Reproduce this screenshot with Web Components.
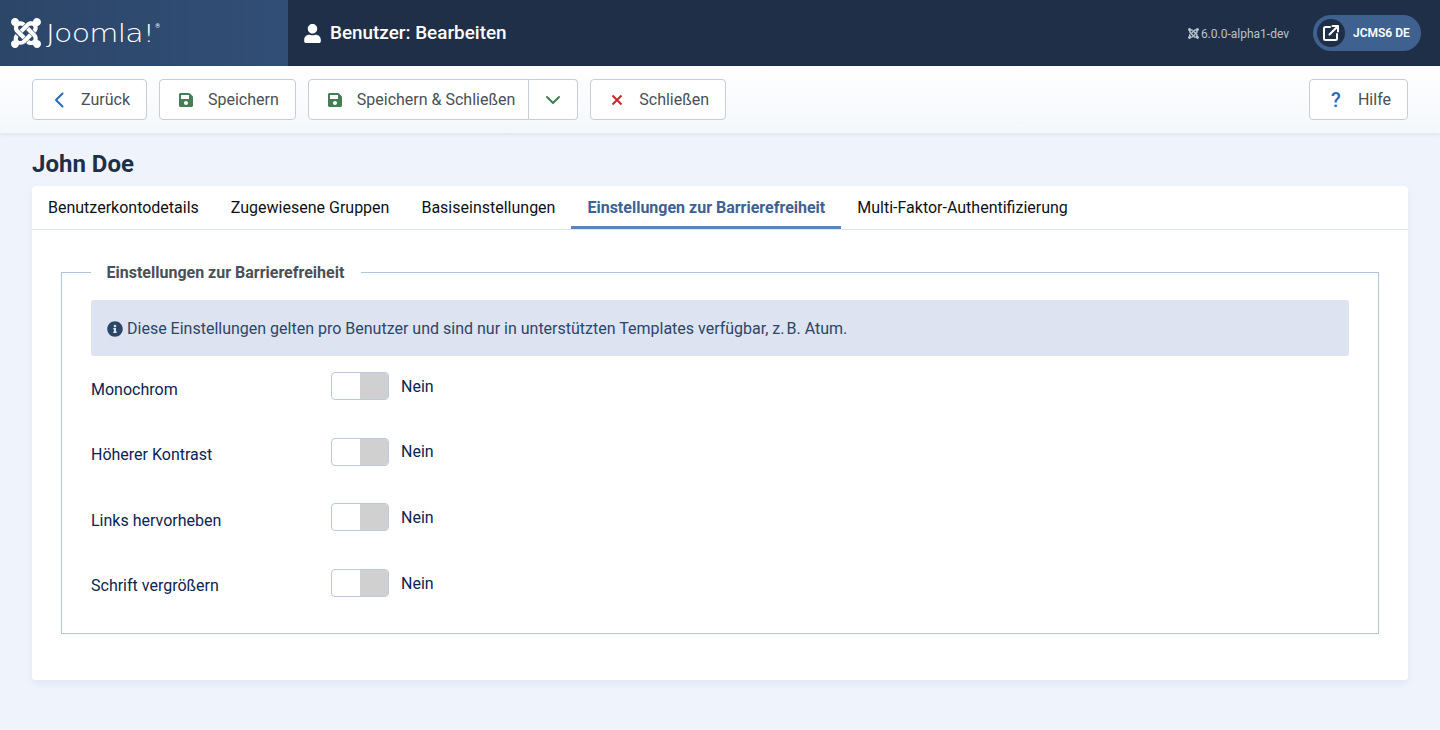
<!DOCTYPE html>
<html lang="de"><head><meta charset="utf-8"><title>Benutzer: Bearbeiten</title>
<style>
html,body{margin:0;height:730px;overflow:hidden;background:#eff4fc;font-family:Roboto,"Liberation Sans",sans-serif}
body{display:flex;flex-direction:column}
</style></head><body>
<app-header></app-header>
<app-toolbar></app-toolbar>
<edit-page></edit-page>
<script>
const ICON={
joomla:'<path d="M.6 92.1C.6 58.8 27.4 32 60.4 32c30 0 54.5 21.9 59.2 50.2 32.6-7.6 67.1.6 96.5 30l-44.3 44.3c-20.5-20.5-42.6-16.3-55.4-3.5-14.3 14.3-14.3 37.9 0 52.2l99.5 99.5-44 44.3c-87.7-87.2-49.7-49.7-99.8-99.7-26.8-26.5-35-64.8-24.8-98.9C20.4 144.6.6 120.7.6 92.1zm129.5 116.4l44.3 44.3c10-10 89.7-89.7 99.7-99.8 14.3-14.3 37.6-14.3 51.9 0 12.8 12.8 17 35-3.5 55.4l44 44.3c31.2-31.2 38.5-67.6 28.9-101.2 29.2-4.1 51.9-29.2 51.9-59.5 0-33.2-26.8-60.1-59.8-60.1-30.3 0-55.4 22.5-59.5 51.6-33.8-9.9-71.7-1.5-98.3 25.1-18.3 19.1-71.1 71.5-99.6 99.9zm266.3 152.2c8.2-32.7-.9-68.5-26.3-93.9-11.8-12.2 5 4.7-99.5-99.7l-44.3 44.3 99.7 99.7c14.3 14.3 14.3 37.6 0 51.9-12.8 12.8-35 17-55.4-3.5l-44 44.3c27.6 30.2 68 38.8 102.7 28 5.5 27.4 29.7 48.1 58.9 48.1 33 0 59.8-26.8 59.8-60.1 0-30.2-22.5-55-51.6-59.1zm-84.3-53.1l-44-44.3c-87.2 87.2-49.7 49.7-99.8 99.7-20.5 20.5-42.6 16.3-55.4 3.5-14.3-14.3-14.3-37.6 0-51.9l-44.3-44.3c-26.5 26.5-35 64.8-24.8 98.9C20.4 367.4.6 391.3.6 419.9c0 33.2 26.8 60.1 59.8 60.1 30.2 0 55-22.4 59.1-51.6 33.8 9.9 71.7 1.4 98.3-25.1 18.2-18.2 29.6-29.4 96.7-96.7z"/>',
save:'<path d="M433.941 129.941l-83.882-83.882A48 48 0 0 0 316.118 32H48C21.49 32 0 53.49 0 80v352c0 26.51 21.49 48 48 48h352c26.51 0 48-21.49 48-48V163.882a48 48 0 0 0-14.059-33.941zM224 416c-35.346 0-64-28.654-64-64 0-35.346 28.654-64 64-64s64 28.654 64 64c0 35.346-28.654 64-64 64zm96-304.52V212c0 6.627-5.373 12-12 12H76c-6.627 0-12-5.373-12-12V108c0-6.627 5.373-12 12-12h228.52c3.183 0 6.235 1.264 8.485 3.515l3.48 3.48A11.996 11.996 0 0 1 320 111.48z"/>',
user:'<path d="M224 256c70.7 0 128-57.3 128-128S294.7 0 224 0 96 57.3 96 128s57.3 128 128 128zm89.6 32h-16.7c-22.2 10.2-46.9 16-72.9 16s-50.6-5.8-72.9-16h-16.7C60.2 288 0 348.2 0 422.4V464c0 26.5 21.5 48 48 48h352c26.5 0 48-21.5 48-48v-41.6c0-74.2-60.2-134.4-134.4-134.4z"/>',
info:'<path d="M256 8C119.043 8 8 119.083 8 256c0 136.997 111.043 248 248 248s248-111.003 248-248C504 119.083 392.957 8 256 8zm0 110c23.196 0 42 18.804 42 42s-18.804 42-42 42-42-18.804-42-42 18.804-42 42-42zm56 254c0 6.627-5.373 12-12 12h-88c-6.627 0-12-5.373-12-12v-24c0-6.627 5.373-12 12-12h12v-64h-12c-6.627 0-12-5.373-12-12v-24c0-6.627 5.373-12 12-12h64c6.627 0 12 5.373 12 12v100h12c6.627 0 12 5.373 12 12v24z"/>'
};
const fa=(n,w,h,c,vb)=>`<svg width="${w}" height="${h}" viewBox="${vb||'0 32 448 448'}" fill="${c}" aria-hidden="true">${ICON[n]}</svg>`;

function def(name,html){
  customElements.define(name,class extends HTMLElement{
    constructor(){super();this.attachShadow({mode:'open'}).innerHTML=typeof html==='function'?html(this):html;}
  });
}

def('app-header',`<style>
:host{display:flex;height:66px;flex:none;background:#1f2f48;color:#fff;align-items:stretch}
.logo{width:288px;box-sizing:border-box;padding-left:11px;display:flex;align-items:center;gap:5px;background:linear-gradient(90deg,#2c4668,#314e76)}
.word{font:200 25px/1 "DejaVu Sans",Lato,sans-serif;letter-spacing:-.65px;color:#fff;display:flex;align-items:flex-start;transform:scaleX(1.2);transform-origin:left center}
.word sup{font:400 5px/1 Roboto,sans-serif;letter-spacing:0;margin:3px 0 0 1px}
.title{display:flex;align-items:center;gap:9px;padding-left:16px;font:500 18.9px/1 Roboto,sans-serif;flex:1}
.ver{display:flex;align-items:center;gap:2px;font:400 12px/1 Roboto,sans-serif;color:#b9c2cf;margin:1px 24px 0 0}
.pill{align-self:center;display:flex;align-items:center;height:36px;width:108px;box-sizing:border-box;padding-left:4px;border-radius:18px;background:#3e6190;margin-right:19px;font:600 12px/1 Roboto,sans-serif;gap:8px}
.dot{width:28px;height:28px;border-radius:50%;background:#1f2f48;display:flex;align-items:center;justify-content:center}
</style>
<div class="logo">${fa('joomla',30,30,'#fff')}<span class="word">Joomla!<sup>®</sup></span></div>
<div class="title">${fa('user',17,19,'#fff','0 0 448 512')}<span>Benutzer: Bearbeiten</span></div>
<div class="ver">${fa('joomla',11,11,'#b9c2cf')}<span>6.0.0-alpha1-dev</span></div>
<div class="pill"><span class="dot"><svg width="18" height="18" viewBox="0 0 18 18" fill="none" stroke="#fff" stroke-width="2" stroke-linecap="round" stroke-linejoin="round"><path d="M8 3H3.500A1.500 1.500 0 0 0 2 4.500V14.500A1.500 1.500 0 0 0 3.500 16H13.500A1.500 1.500 0 0 0 15 14.500V10"/><path d="M7.500 10.500L15.500 2.500M10.500 2H16V7.500"/></svg></span><span>JCMS6 DE</span></div>`);

def('tool-btn',el=>{
  const ic=el.getAttribute('icon');
  const icons={
    back:`<svg width="14" height="16" viewBox="0 0 14 16" fill="none" stroke="#2a69b8" stroke-width="2" stroke-linecap="round" stroke-linejoin="round"><path d="M10.500 1.500L4 8l6.500 6.500"/></svg>`,
    save:fa('save',14,14,'#457d54'),
    close:`<svg width="14" height="14" viewBox="0 0 14 14" fill="none" stroke="#c52827" stroke-width="2"><path d="M2.500 2.500l9 9M11.500 2.500l-9 9"/></svg>`,
    help:`<span style="font:500 20px/1 Roboto,sans-serif;color:#2a69b8">?</span>`
  };
  const pr=el.getAttribute('pr')||'16';
  return `<style>
:host{display:inline-flex;align-items:center;height:41px;box-sizing:border-box;background:#fff;border:1px solid #c6ced9;border-radius:4px;padding:0 ${pr}px 0 16px;font:400 16px/1 Roboto,sans-serif;color:#495057}
.i{width:20px;margin-right:12px;display:flex;justify-content:center;align-items:center}
</style><span class="i">${icons[ic]}</span><span><slot></slot></span>`;
});

def('app-toolbar',`<style>
:host{display:flex;height:67px;flex:none;box-sizing:border-box;padding:13px 32px 0;gap:12px;background:linear-gradient(180deg,#fff,#f4f7fb);box-shadow:0 2px 4px rgba(30,60,110,.08);position:relative;z-index:1}
.group{display:inline-flex;height:41px}
.group tool-btn{border-radius:4px 0 0 4px}
.caret{display:flex;align-items:center;justify-content:center;width:49px;box-sizing:border-box;height:41px;background:#fff;border:1px solid #c6ced9;border-left:0;border-radius:0 4px 4px 0}
.sp{flex:1}
</style>
<tool-btn icon="back">Zurück</tool-btn>
<tool-btn icon="save">Speichern</tool-btn>
<span class="group"><tool-btn icon="save" pr="13">Speichern &amp; Schließen</tool-btn><span class="caret"><svg width="16" height="10" viewBox="0 0 16 10" fill="none" stroke="#457d54" stroke-width="2" stroke-linecap="round" stroke-linejoin="round"><path d="M2 2l6 6 6-6"/></svg></span></span>
<tool-btn icon="close">Schließen</tool-btn>
<span class="sp"></span>
<tool-btn icon="help">Hilfe</tool-btn>`);

def('tab-bar',`<style>
:host{display:flex;height:44px;box-sizing:border-box;border-bottom:1px solid #dfe4ec;font:400 16px/1 Roboto,sans-serif}
span{display:flex;align-items:center;padding:1px 16px 0;height:43px;box-sizing:border-box;color:#0d1117}
.on{font-weight:700;color:#3f6192;border-bottom:3px solid #5f82b8;padding-top:4px}
</style>
<span>Benutzerkontodetails</span><span>Zugewiesene Gruppen</span><span>Basiseinstellungen</span><span class="on">Einstellungen zur Barrierefreiheit</span><span>Multi-Faktor-Authentifizierung</span>`);

def('switch-row',el=>`<style>
:host{display:flex;height:65.6px;box-sizing:border-box;font:400 16px/1 Roboto,sans-serif;color:#0c2450}
.l{width:240px;padding-top:9.5px}
.t{width:58px;height:28px;box-sizing:border-box;border:1px solid #b9c9e0;border-radius:4px;background:#fff;display:flex;justify-content:flex-end;overflow:hidden;margin-right:12px}
.t i{display:block;width:28px;background:#d0d0d0}
.v{padding-top:6.8px}
</style><div class="l">${el.getAttribute('label')}</div><div class="t"><i></i></div><div class="v">Nein</div>`);

def('edit-page',`<style>
:host{display:block;padding:0 32px;flex:1}
h1{margin:0;height:53px;box-sizing:border-box;padding-top:19px;font:700 24px/1 Roboto,sans-serif;color:#1f2f48}
.card{background:#fff;border-radius:4px;height:494px;box-shadow:0 4px 8px rgba(60,90,150,.08)}
fieldset{margin:42px 29px 0;padding:0 29px;height:362px;box-sizing:border-box;border:1px solid #b2c5db;min-inline-size:0}
legend{padding:0 16.5px 0 15.5px;font:700 16px/0 Roboto,sans-serif;color:#495057;height:0}
.alert{display:flex;align-items:center;gap:4px;height:56px;box-sizing:border-box;margin-top:27px;padding:2px 16px 0;background:#dde3f0;border-radius:3px;font:400 16px/1 Roboto,sans-serif;color:#2c4668}
.rows{margin-top:16px}
</style>
<h1>John Doe</h1>
<div class="card"><tab-bar></tab-bar>
<fieldset><legend>Einstellungen zur Barrierefreiheit</legend>
<div class="alert">${fa('info',16,16,'#2c4668','0 0 512 512')}<span>Diese Einstellungen gelten pro Benutzer und sind nur in unterstützten Templates verfügbar, z.&#8239;B. Atum.</span></div>
<div class="rows"><switch-row label="Monochrom"></switch-row><switch-row label="Höherer Kontrast"></switch-row><switch-row label="Links hervorheben"></switch-row><switch-row label="Schrift vergrößern"></switch-row></div>
</fieldset></div>`);
</script>
</body></html>
